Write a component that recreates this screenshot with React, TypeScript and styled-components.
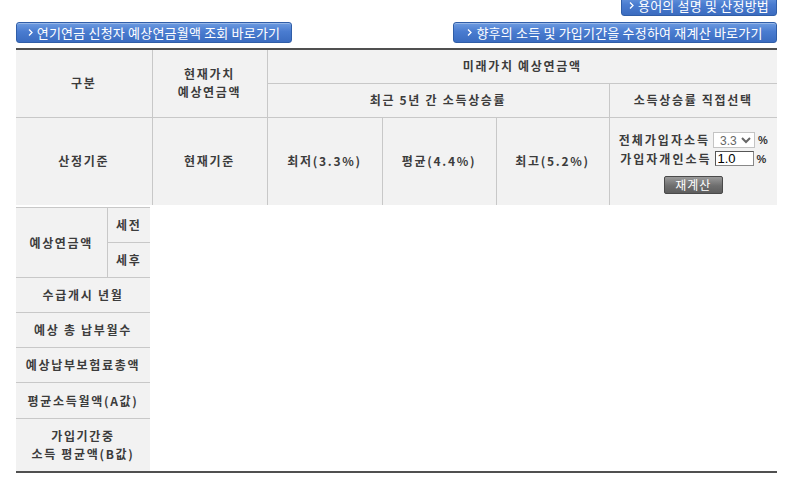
import React, { FC } from "react";
import styled, { createGlobalStyle, css } from "styled-components";

const GlobalStyle = createGlobalStyle`
    html, body {
        margin: 0;
        padding: 0;
        background: #fff;
    }
    body {
        font-family: "Noto Sans CJK KR", "Liberation Sans", sans-serif;
        color: #3c3c3c;
    }
`;

const Arrow: FC = () => (
    <svg width="5" height="7" viewBox="0 0 5 7">
        <path d="M1 0.5 L4 3.5 L1 6.5" fill="none" stroke="#fff" strokeWidth="1.3" />
    </svg>
);

const App: FC = () => {
    return (
        <Page>
            <GlobalStyle />
            <TopRow>
                <LinkButton w={156}>
                    <Arrow />
                    용어의 설명 및 산정방법
                </LinkButton>
            </TopRow>
            <ButtonRow>
                <LinkButton w={276}>
                    <Arrow />
                    연기연금 신청자 예상연금월액 조회 바로가기
                </LinkButton>
                <LinkButton w={324}>
                    <Arrow />
                    향후의 소득 및 가입기간을 수정하여 재계산 바로가기
                </LinkButton>
            </ButtonRow>

            <HeadTable>
                <colgroup>
                    <col style={{ width: 136 }} />
                    <col style={{ width: 115 }} />
                    <col style={{ width: 115 }} />
                    <col style={{ width: 114 }} />
                    <col style={{ width: 113 }} />
                    <col style={{ width: 168 }} />
                </colgroup>
                <tbody>
                    <Row h={34}>
                        <Cell rowSpan={2} first>구분</Cell>
                        <Cell rowSpan={2}>
                            현재가치
                            <br />
                            예상연금액
                        </Cell>
                        <Cell colSpan={4} last>미래가치 예상연금액</Cell>
                    </Row>
                    <Row h={34}>
                        <Cell colSpan={3}>최근 5년 간 소득상승률</Cell>
                        <Cell last>소득상승률 직접선택</Cell>
                    </Row>
                    <Row h={88}>
                        <Cell first noBottom>산정기준</Cell>
                        <Cell noBottom>현재기준</Cell>
                        <Cell noBottom>최저(3.3%)</Cell>
                        <Cell noBottom>평균(4.4%)</Cell>
                        <Cell noBottom>최고(5.2%)</Cell>
                        <Cell last noBottom>
                            <RateForm>
                                <RateLine>
                                    <RateLabel>전체가입자소득</RateLabel>
                                    <RateSelect defaultValue="3.3">
                                        <option value="3.3">3.3</option>
                                        <option value="4.4">4.4</option>
                                        <option value="5.2">5.2</option>
                                    </RateSelect>
                                    <Percent>%</Percent>
                                </RateLine>
                                <RateLine>
                                    <RateLabel>가입자개인소득</RateLabel>
                                    <RateInput defaultValue="1.0" />
                                    <Percent>%</Percent>
                                </RateLine>
                                <RecalcButton>재계산</RecalcButton>
                            </RateForm>
                        </Cell>
                    </Row>
                </tbody>
            </HeadTable>

            <BodySection>
                <SideTable>
                    <colgroup>
                        <col style={{ width: 91 }} />
                        <col style={{ width: 43 }} />
                    </colgroup>
                    <tbody>
                        <Row h={35}>
                            <SideCell rowSpan={2}>예상연금액</SideCell>
                            <SideCell sub>세전</SideCell>
                        </Row>
                        <Row h={35}>
                            <SideCell sub>세후</SideCell>
                        </Row>
                        <Row h={35}>
                            <SideCell colSpan={2}>수급개시 년월</SideCell>
                        </Row>
                        <Row h={35}>
                            <SideCell colSpan={2}>예상 총 납부월수</SideCell>
                        </Row>
                        <Row h={35}>
                            <SideCell colSpan={2}>예상납부보험료총액</SideCell>
                        </Row>
                        <Row h={36}>
                            <SideCell colSpan={2}>평균소득월액(A값)</SideCell>
                        </Row>
                        <Row h={52}>
                            <SideCell colSpan={2} noBottom>
                                가입기간중
                                <br />
                                소득 평균액(B값)
                            </SideCell>
                        </Row>
                    </tbody>
                </SideTable>
            </BodySection>
        </Page>
    );
};

export default App;

const Page = styled.div`
    width: 761px;
    margin: -5px 0 0 16px;
`;

const TopRow = styled.div`
    display: flex;
    justify-content: flex-end;
`;

const ButtonRow = styled.div`
    display: flex;
    justify-content: space-between;
    margin-top: 6px;
`;

const LinkButton = styled.button<{ w: number }>`
    display: inline-flex;
    align-items: center;
    justify-content: center;
    gap: 4px;
    width: ${(p) => p.w}px;
    height: 21px;
    padding: 0;
    border: 1px solid #305ea8;
    border-radius: 3px;
    background: linear-gradient(#6d9be0 0%, #4a7cd0 45%, #3b6cc0 100%);
    box-shadow: inset 0 1px 0 rgba(255, 255, 255, 0.3);
    color: #fff;
    font-family: "Noto Sans CJK KR", sans-serif;
    font-size: 13px;
    line-height: 19px;
    letter-spacing: 0.2px;
    cursor: pointer;
    white-space: nowrap;
`;

const HeadTable = styled.table`
    width: 761px;
    margin-top: 5px;
    border-collapse: collapse;
    table-layout: fixed;
    border-top: 2px solid #505050;
    background: #f2f2f2;
`;

const Row = styled.tr<{ h: number }>`
    height: ${(p) => p.h}px;
`;

interface CellProps {
    first?: boolean;
    last?: boolean;
    noBottom?: boolean;
}

const cellText = css`
    padding: 0;
    text-align: center;
    vertical-align: middle;
    font-size: 12px;
    font-weight: 700;
    letter-spacing: 1.7px;
    line-height: 18px;
    color: #3c3c3c;
`;

const Cell = styled.td<CellProps>`
    ${cellText};
    border: 1px solid #c8c8c8;
    ${(p) => p.first && css`border-left: none;`}
    ${(p) => p.last && css`border-right: none;`}
    ${(p) => p.noBottom && css`border-bottom: none;`}
`;

const RateForm = styled.div`
    display: flex;
    flex-direction: column;
    align-items: center;
    gap: 2px;
    padding-top: 3px;
`;

const RateLine = styled.div`
    display: flex;
    align-items: center;
    gap: 3px;
    height: 17px;
`;

const RateLabel = styled.span`
    letter-spacing: 2px;
`;

const RateSelect = styled.select`
    width: 42px;
    height: 16px;
    padding: 0 0 0 2px;
    border: 1px solid #c4c4c4;
    background: #fff;
    color: #666;
    font-family: "Liberation Sans", sans-serif;
    font-size: 12px;
    letter-spacing: 0;
`;

const RateInput = styled.input`
    width: 33px;
    height: 13px;
    padding: 0 2px;
    border: 1px solid #888;
    border-top-color: #555;
    border-left-color: #555;
    background: #fff;
    color: #000;
    font-family: "Liberation Sans", sans-serif;
    font-size: 13px;
    letter-spacing: 0;
`;

const Percent = styled.span`
    font-family: "Liberation Sans", sans-serif;
    font-size: 11px;
    font-weight: 700;
    letter-spacing: 0;
    color: #333;
`;

const RecalcButton = styled.button`
    margin-top: 7px;
    width: 59px;
    height: 18px;
    padding: 0;
    border: 1px solid #4a4a4a;
    border-radius: 2px;
    background: linear-gradient(#9a9a9a, #6e6e6e 55%, #5e5e5e);
    color: #fff;
    font-family: "Noto Sans CJK KR", sans-serif;
    font-size: 12px;
    line-height: 16px;
    letter-spacing: 1px;
    cursor: pointer;
`;

const BodySection = styled.div`
    margin-top: 2px;
    border-bottom: 2px solid #505050;
`;

const SideTable = styled.table`
    width: 134px;
    border-collapse: collapse;
    table-layout: fixed;
    background: #f2f2f2;
`;

const SideCell = styled.td<{ sub?: boolean; noBottom?: boolean }>`
    ${cellText};
    border-top: 1px solid #c8c8c8;
    border-bottom: 1px solid #c8c8c8;
    ${(p) => p.sub && css`border-left: 1px solid #c8c8c8;`}
    ${(p) => p.noBottom && css`border-bottom: none;`}
`;
